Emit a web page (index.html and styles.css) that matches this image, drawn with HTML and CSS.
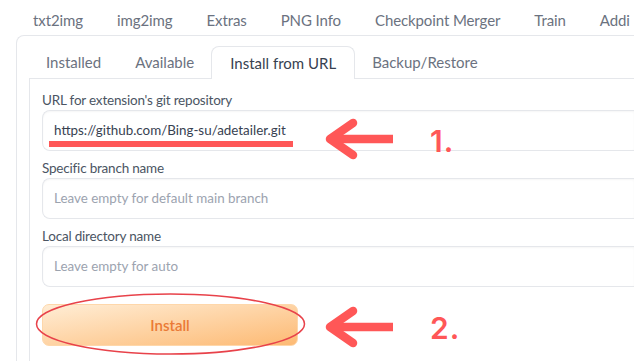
FILE: index.html
```html
<!DOCTYPE html>
<html lang="en">
<head>
    <meta charset="UTF-8">
    <meta name="viewport" content="width=device-width, initial-scale=1.0">
    <title>extensions - install from url</title>
    <link rel="stylesheet" href="styles.css">
</head>
<body>
    <div class="topnav">
        <span class="nav-tab">txt2img</span>
        <span class="nav-tab">img2img</span>
        <span class="nav-tab">Extras</span>
        <span class="nav-tab">PNG Info</span>
        <span class="nav-tab">Checkpoint Merger</span>
        <span class="nav-tab">Train</span>
        <span class="nav-tab">Addi</span>
    </div>

    <div class="outer">
        <div class="subtabs">
            <span class="sub-tab">Installed</span>
            <span class="sub-tab">Available</span>
            <span class="sub-tab selected">Install from URL</span>
            <span class="sub-tab">Backup/Restore</span>
        </div>

        <div class="inner">
            <div class="field">
                <label>URL for extension's git repository</label>
                <div class="input filled">https://github.com/Bing-su/adetailer.git</div>
            </div>
            <div class="field">
                <label>Specific branch name</label>
                <div class="input">Leave empty for default main branch</div>
            </div>
            <div class="field">
                <label>Local directory name</label>
                <div class="input">Leave empty for auto</div>
            </div>
            <button class="install-btn">Install</button>
        </div>
    </div>

    <!-- annotations drawn over the screenshot -->
    <svg class="marks" width="634" height="361" viewBox="0 0 634 361">
        <rect x="49" y="141" width="244" height="6" fill="#ff5757"/>
        <g stroke="#ff5757" stroke-width="8.5" fill="none" stroke-linecap="round" stroke-linejoin="round">
            <polyline points="353,123 330,139 353,155"/>
            <line x1="332" y1="139" x2="393" y2="139" stroke-linecap="butt"/>
            <polyline points="353,311 330,327 353,343"/>
            <line x1="332" y1="327" x2="393" y2="327" stroke-linecap="butt"/>
        </g>
        <ellipse cx="170.5" cy="324" rx="134" ry="30" fill="none" stroke="#e8424a" stroke-width="1.5"/>
    </svg>
    <div class="step one">1.</div>
    <div class="step two">2.</div>
</body>
</html>
```

FILE: styles.css
```css
body{
    margin: 0;
    font-family: "Lato", "Noto Sans", sans-serif;
    background: #fff;
    overflow: hidden;
    width: 634px;
    height: 361px;
    position: relative;
}
.topnav{
    display: flex;
    height: 35px;
    padding-left: 16px;
    white-space: nowrap;
}
.nav-tab{
    padding: 5px 17px 0;
    line-height: 30px;
    font-size: 15px;
    letter-spacing: -0.1px;
    color: #6b7280;
}
.outer{
    margin-left: 16px;
    border: 1px solid #e5e7eb;
    border-right: 0;
    border-top-left-radius: 8px;
    padding: 10px 0 0 12px;
    height: 400px;
}
.subtabs{
    display: flex;
    height: 32px;
    white-space: nowrap;
}
.sub-tab{
    padding: 1px 17px 0;
    line-height: 31px;
    font-size: 15px;
    color: #6b7280;
}
.sub-tab.selected{
    padding: 1px 18px 0;
    color: #374151;
    background: #fff;
    border: 1px solid #e5e7eb;
    border-bottom: 0;
    border-radius: 8px 8px 0 0;
    line-height: 30px;
    margin-bottom: -1px;
    position: relative;
}
.inner{
    border: 1px solid #e5e7eb;
    border-right: 0;
    padding: 11px 0 0 12px;
    height: 360px;
}
.field{
    margin-bottom: 7px;
}
.field label{
    display: block;
    font-size: 13.5px;
    letter-spacing: -0.2px;
    line-height: 20px;
    color: #4b5563;
}
.input{
    height: 41px;
    box-sizing: border-box;
    border: 1px solid #e5e7eb;
    border-right: 0;
    border-radius: 8px 0 0 8px;
    box-shadow: inset 0 1px 2px rgba(0,0,0,0.04);
    padding-left: 11px;
    line-height: 39px;
    font-size: 13.4px;
    color: #9ca3af;
}
.input.filled{
    color: #374151;
}
.install-btn{
    display: block;
    margin-top: 17px;
    width: 256px;
    height: 42px;
    border: 1px solid #fed7aa;
    border-radius: 7px;
    background: linear-gradient(to bottom right, #ffedd5, #fdba74);
    color: #ea7a35;
    font-family: "Lato", sans-serif;
    font-size: 15px;
    font-weight: 600;
}
.marks{
    position: absolute;
    left: 0;
    top: 0;
}
.step{
    position: absolute;
    left: 430px;
    font-family: "Inter", sans-serif;
    font-weight: 600;
    font-size: 30px;
    letter-spacing: 1px;
    line-height: 30px;
    color: #ff5757;
}
.step.one{
    top: 126px;
}
.step.two{
    top: 313px;
}
```
